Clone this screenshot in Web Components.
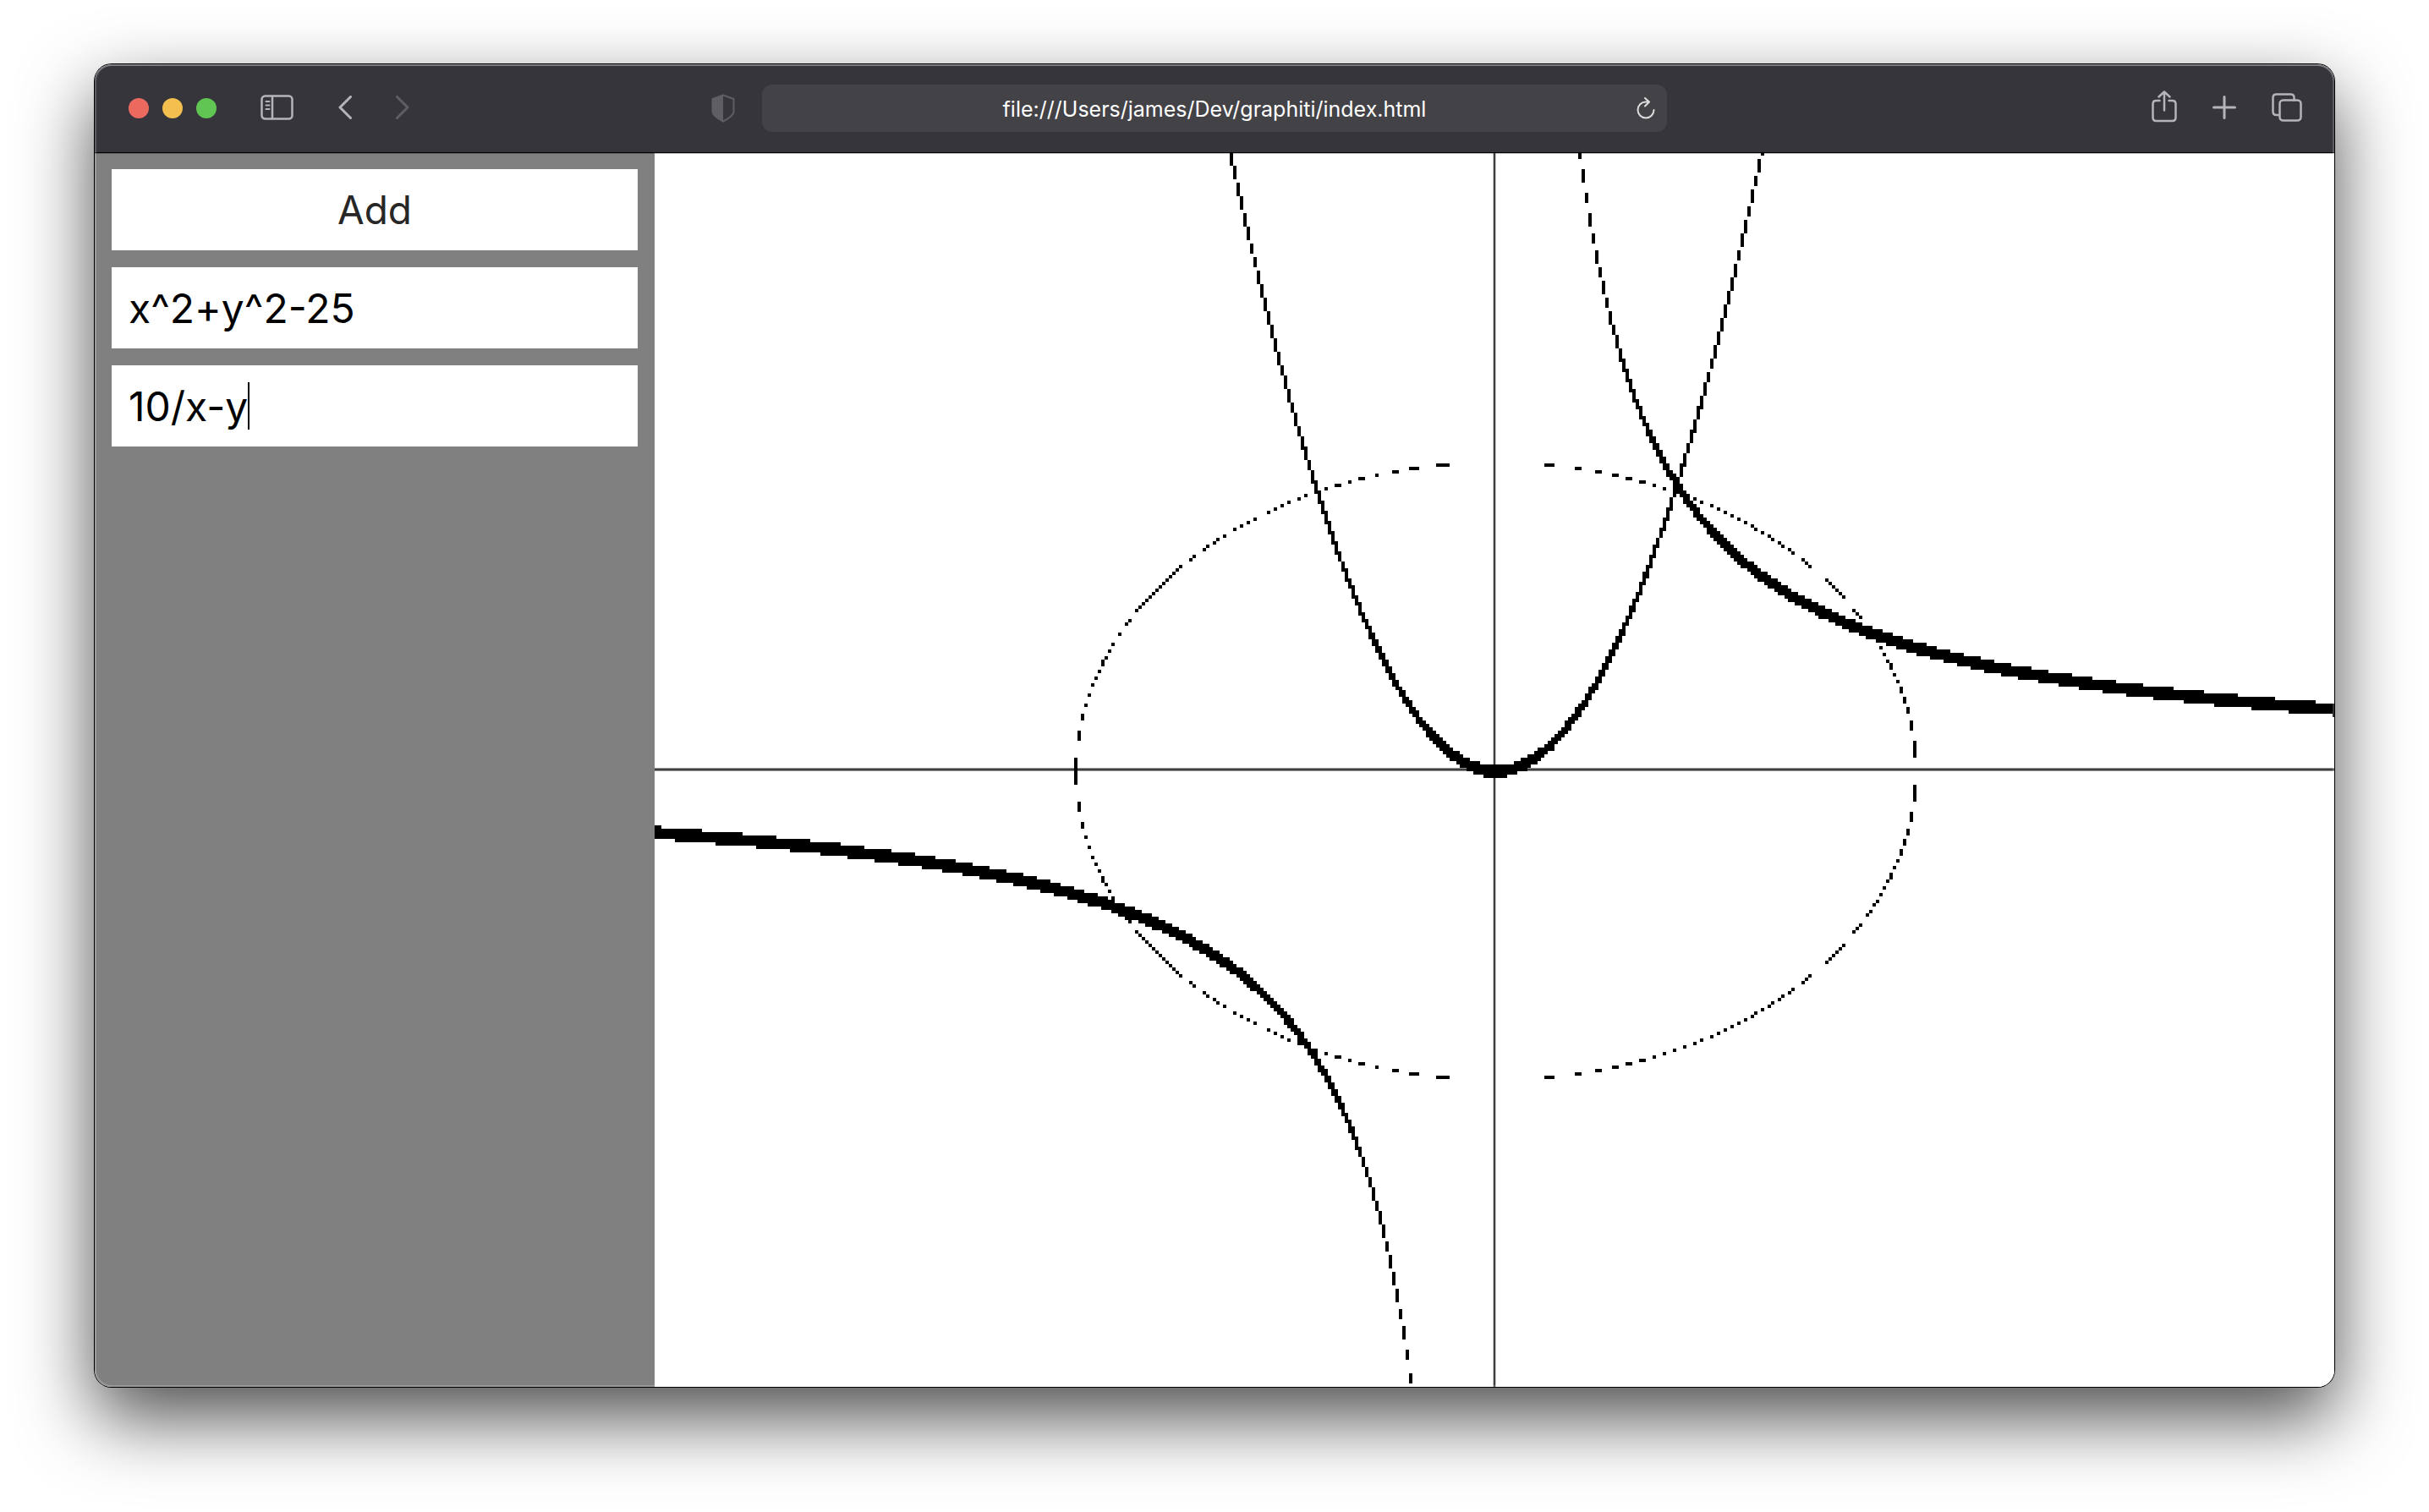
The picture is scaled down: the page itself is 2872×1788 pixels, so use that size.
<!DOCTYPE html>
<html lang="en">
<head>
<meta charset="utf-8">
<title>Graphiti</title>
<style>
  html, body { height: 100%; margin: 0; background: #fff; }
  body { font-family: Inter, "Liberation Sans", sans-serif; }
</style>
</head>
<body>
<browser-window>
  <browser-toolbar slot="toolbar" address="file:///Users/james/Dev/graphiti/index.html"></browser-toolbar>
  <graph-app></graph-app>
</browser-window>

<script>
class Base extends HTMLElement {
  constructor() {
    super();
    this.attachShadow({ mode: "open" }).innerHTML = this.constructor.markup;
  }
}

customElements.define("browser-window", class extends Base {
  static markup = `
    <style>
      :host { display: flex; box-sizing: border-box; height: 100vh; padding: 76px 112px 148px; }
      .frame {
        flex: 1; min-width: 0; display: flex; flex-direction: column; position: relative;
        border-radius: 20px; background: #fff;
        box-shadow: 0 0 0 1px #000, 0 36px 88px rgba(0, 0, 0, .7);
      }
      .clip { flex: 1; min-height: 0; display: flex; flex-direction: column; border-radius: 20px; overflow: hidden; }
      ::slotted(:not([slot])) { flex: 1; min-height: 0; }
      .frame::after {
        content: ""; position: absolute; inset: 0; z-index: 2; border-radius: 20px; pointer-events: none;
        box-shadow: inset 0 0 0 2px rgba(255, 255, 255, .2), inset 0 2px 0 rgba(255, 255, 255, .2);
      }
    </style>
    <div class="frame"><div class="clip"><slot name="toolbar"></slot><slot></slot></div></div>`;
});

customElements.define("tool-button", class extends Base {
  static markup = `
    <style>
      :host { display: block; color: #b5b4ba; }
      :host([dim]) { color: #5f5e64; }
      button { display: flex; margin: 0; padding: 0; border: 0; background: none; color: inherit; }
    </style>
    <button type="button"><slot></slot></button>`;
  connectedCallback() {
    this.shadowRoot.querySelector("button").setAttribute("aria-label", this.getAttribute("label"));
  }
});

customElements.define("browser-toolbar", class extends Base {
  static markup = `
    <style>
      :host {
        display: grid; grid-template-columns: 1fr minmax(0, 1070px) 1fr; align-items: center;
        height: 104px; background: #36353b; position: relative; z-index: 1; font-size: 25px;
        box-shadow: 0 1px 0 #000, 0 2px 0 rgba(0, 0, 0, .25);
      }
      svg { display: block; fill: none; stroke: currentColor; stroke-width: 3; stroke-linecap: round; stroke-linejoin: round; }
      .side { display: flex; align-items: center; }
      .lights { display: flex; gap: 16px; margin-left: 40px; }
      .lights i { width: 24px; height: 24px; border-radius: 50%; }
      .nav { display: flex; align-items: center; gap: 52px; margin-left: 52px; }
      .shield { margin-left: auto; margin-right: 32px; }
      .right { justify-content: flex-end; gap: 42px; padding-right: 38px; }
      .address {
        display: flex; align-items: center; height: 56px; box-sizing: border-box; padding: 0 14px;
        border-radius: 12px; background: #434247;
      }
      input {
        flex: 1; min-width: 0; border: 0; padding: 2px 0 0 22px; background: none; outline: 0;
        color: #fff; font: inherit; text-align: center;
      }
      tool-button.reload { color: #dddde0; }
    </style>
    <div class="side">
      <div class="lights"><i style="background:#ec695e"></i><i style="background:#f4bf4f"></i><i style="background:#61c554"></i></div>
      <div class="nav">
        <tool-button label="Sidebar"><svg width="40" height="32" viewBox="0 0 40 32"><rect x="1.500" y="1.500" width="36" height="27" rx="4" stroke-width="2.500"/><path stroke-width="2.500" d="M14 2v26"/><path stroke-width="2" d="M6.500 8h4M6.500 12.500h4M6.500 17h4"/></svg></tool-button>
        <tool-button label="Back"><svg width="16" height="30" viewBox="0 0 16 30"><path d="M14.500 1.500 2 14 14.500 26.500"/></svg></tool-button>
        <tool-button label="Forward" dim><svg width="16" height="30" viewBox="0 0 16 30"><path d="M1.500 1.500 14 14 1.500 26.500"/></svg></tool-button>
      </div>
      <tool-button class="shield" label="Privacy report" dim><svg width="28" height="34" viewBox="0 0 28 34"><path stroke-width="2" d="M14 1.500 1.500 6v15q0 5 12.500 11.500Q26.500 26 26.500 21V6z"/><path fill="currentColor" stroke="none" d="M14 1 1 6v15q0 6 13 12z"/></svg></tool-button>
    </div>
    <div class="address">
      <input aria-label="Address" spellcheck="false">
      <tool-button class="reload" label="Reload"><svg width="22" height="26" viewBox="0 0 22 26"><path stroke-width="2" d="M14.500 5.500H11A9.500 9.500 0 1 0 20.500 15M10 1l5 4.500-5 5"/></svg></tool-button>
    </div>
    <div class="side right">
      <tool-button label="Share"><svg width="30" height="42" viewBox="0 0 30 42"><path stroke-width="2.500" d="M9.500 12H5.500q-4 0-4 4v16q0 4 4 4h19q4 0 4-4V16q0-4-4-4h-4M15 23.500V1.500M8.500 7.500 15 1.500l6.500 6"/></svg></tool-button>
      <tool-button label="New tab"><svg width="28" height="30" viewBox="0 0 28 30"><path d="M14 1.500v25M1.500 14h25"/></svg></tool-button>
      <tool-button label="Tabs"><svg width="36" height="36" viewBox="0 0 36 36"><path stroke-width="2.500" d="M8.500 26H5.500q-4 0-4-4V5.500q0-4 4-4h17q4 0 4 4v3"/><rect stroke-width="2.500" x="9.500" y="8.500" width="25" height="24" rx="4"/></svg></tool-button>
    </div>`;
  connectedCallback() {
    this.shadowRoot.querySelector("input").value = this.getAttribute("address");
  }
});

customElements.define("equation-field", class extends Base {
  static markup = `
    <style>
      :host { display: block; }
      input {
        display: block; box-sizing: border-box; width: 100%; height: 96px; padding: 0 20px;
        border: 0; border-radius: 0; outline: 0; background: #fff; color: #000; font: inherit;
      }
      .field { display: grid; align-items: center; }
      .field > * { grid-area: 1 / 1; }
      /* The caret trails an invisible copy of the value. */
      .caret { display: none; pointer-events: none; padding-left: 20px; align-items: center; }
      .caret::before { content: attr(data-value); visibility: hidden; }
      .caret::after { content: ""; width: 2px; height: 56px; background: #000; }
      :host([active]) input { caret-color: transparent; }
      :host([active]) .caret { display: flex; }
    </style>
    <div class="field"><input aria-label="Equation" spellcheck="false"><span class="caret"></span></div>`;
  connectedCallback() {
    const input = this.shadowRoot.querySelector("input");
    const caret = this.shadowRoot.querySelector(".caret");
    input.value = caret.dataset.value = this.getAttribute("value") || "";
    input.addEventListener("input", () => { caret.dataset.value = input.value; });
  }
});

customElements.define("equation-list", class extends Base {
  static markup = `
    <style>
      :host { display: flex; flex-direction: column; gap: 20px; box-sizing: border-box; padding: 20px; background: #808080; font-size: 48px; }
      button { height: 96px; border: 0; border-radius: 0; padding: 0; background: #fff; color: #272727; font: inherit; font-size: 46px; }
    </style>
    <button type="button">Add</button>
    <slot></slot>`;
  connectedCallback() {
    this.shadowRoot.querySelector("button").addEventListener("click", () => {
      this.append(document.createElement("equation-field"));
    });
  }
});

customElements.define("graph-plot", class extends Base {
  static markup = `
    <style>
      :host { display: block; overflow: hidden; background: #fff; }
      canvas { display: block; width: 100%; height: 100%; }
    </style>
    <canvas role="img" aria-label="Graph of the equations"></canvas>`;
  connectedCallback() {
    this.draw();
    addEventListener("resize", () => this.draw());
  }
  draw() {
    const canvas = this.shadowRoot.querySelector("canvas");
    const w = canvas.width = this.clientWidth;
    const h = canvas.height = this.clientHeight;
    const g = canvas.getContext("2d");
    const step = 4, tolerance = 0.1;
    const curves = [
      (x, y) => x * x - y,
      (x, y) => x * x + y * y - 25,
      (x, y) => 10 / x - y
    ];
    const cx = Math.round(w / 2), cy = Math.round(h / 2);
    g.fillStyle = "#c8c8c8";
    g.fillRect(cx - 2, 0, 4, h);
    g.fillStyle = "#909090";
    g.fillRect(0, cy - 2, w, 4);
    g.fillStyle = "#404040";
    g.fillRect(cx - 1, 0, 2, h);
    g.fillRect(0, cy - 1, w, 2);
    g.fillStyle = "#000";
    // Both axes run from -10 to 10; a cell is filled where a curve is near zero.
    for (let py = 0; py < h; py += step) {
      for (let px = 0; px < w; px += step) {
        const x = (px / w - 0.5) * 20, y = (0.5 - py / h) * 20;
        if (curves.some(f => Math.abs(f(x, y)) < tolerance)) g.fillRect(px, py, step, step);
      }
    }
  }
});

customElements.define("graph-app", class extends Base {
  static markup = `
    <style>
      :host { display: grid; grid-template-columns: 1fr 3fr; }
      equation-list, graph-plot { min-width: 0; min-height: 0; }
    </style>
    <equation-list>
      <equation-field value="x^2+y^2-25"></equation-field>
      <equation-field value="10/x-y" active></equation-field>
    </equation-list>
    <graph-plot></graph-plot>`;
});
</script>
</body>
</html>
